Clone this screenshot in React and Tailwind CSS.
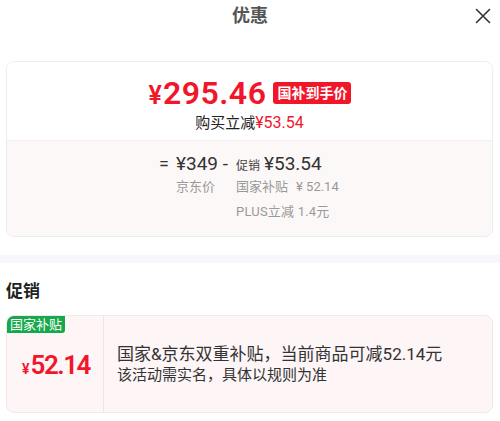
import React from "react";

const font = { fontFamily: 'Roboto, "Noto Sans CJK SC", sans-serif' };

const CloseIcon = () => (
  <svg width="16" height="16" viewBox="0 0 16 16" fill="none" stroke="#333" strokeWidth="1.6" strokeLinecap="round">
    <path d="M1.5 1.5 L14.5 14.5 M14.5 1.5 L1.5 14.5" />
  </svg>
);

export default function App() {
  return (
    <div className="w-[500px] h-[421px] bg-white overflow-hidden text-[#333]" style={font}>
      {/* Header */}
      <div className="grid grid-cols-[1fr_auto_1fr] items-center h-[32px] px-[8px]">
        <div />
        <h1 className="text-[18px] font-bold text-[#555] leading-none">优惠</h1>
        <div className="justify-self-end pr-[1px]">
          <CloseIcon />
        </div>
      </div>

      {/* Price summary card */}
      <div className="mt-[29px] ml-[6px] mr-[7px] rounded-lg border border-[#ededed] overflow-hidden">
        <div className="h-[78px] flex flex-col items-center pt-[15px] bg-white">
          <div className="flex items-center gap-[7px] h-[32px] pl-[1px]">
            <div className="flex items-baseline text-[#f2162b] font-semibold leading-none">
              <span className="text-[25px] mr-[1px]">¥</span>
              <span className="text-[32px] tracking-[0.5px]">295.46</span>
            </div>
            <span className="bg-[#f2162b] text-white text-[14px] font-bold leading-[22px] px-[4px] rounded-[3px]">
              国补到手价
            </span>
          </div>
          <div className="mt-[4px] text-[15px] leading-[20px] text-[#222]">
            购买立减<span className="text-[#f2162b] text-[16px]">¥53.54</span>
          </div>
        </div>

        <div className="h-[96px] bg-[#fdf8f8] border-t border-[#f6eeee] pl-[152px] pt-[9px] text-[#333]">
          <div className="flex items-baseline h-[24px]">
            <span className="w-[17px] text-[18px]">=</span>
            <span className="w-[60px] text-[19px]">¥349 -</span>
            <span className="text-[12px] text-[#444] mr-[4px]">促销</span>
            <span className="text-[19px]">¥53.54</span>
          </div>
          <div className="flex items-baseline h-[24px] mt-[3px] text-[13px] text-[#999]">
            <span className="ml-[17px] w-[60px]">京东价</span>
            <span className="mr-[8px]">国家补贴</span>
            <span>¥ 52.14</span>
          </div>
          <div className="flex items-baseline h-[24px] mt-[1px] text-[13px] text-[#999]">
            <span className="ml-[77px] tracking-[0.2px]">PLUS立减 1.4元</span>
          </div>
        </div>
      </div>

      {/* Divider band */}
      <div className="mt-[18px] h-[8px] bg-[#f7f8fb]" />

      {/* Promotions */}
      <h2 className="mt-[16px] ml-[6px] text-[17px] font-bold leading-[24px] text-[#222]">促销</h2>

      <div className="relative mt-[12px] ml-[6px] mr-[7px] h-[98px] rounded-lg border border-[#f3e6e8] bg-[#fdf5f6] flex overflow-hidden">
        <span className="absolute left-0 top-0 bg-[#16a84a] text-white text-[13px] leading-[17px] px-[3px] rounded-br-[3px]">
          国家补贴
        </span>
        <div className="w-[97px] shrink-0 border-r border-[#f3e3e5] flex items-center justify-center pt-[2px] pl-[2px]">
          <div className="flex items-baseline text-[#f2162b] font-semibold leading-none">
            <span className="text-[14px] mr-[1px]">¥</span>
            <span className="text-[26px] tracking-[-1.5px]">52.14</span>
          </div>
        </div>
        <div className="flex flex-col justify-center pl-[13px] pt-[2px]">
          <p className="text-[17px] leading-[21px] text-[#333]">国家&amp;京东双重补贴，当前商品可减52.14元</p>
          <p className="text-[15px] leading-[21px] text-[#333]">该活动需实名，具体以规则为准</p>
        </div>
      </div>
    </div>
  );
}
